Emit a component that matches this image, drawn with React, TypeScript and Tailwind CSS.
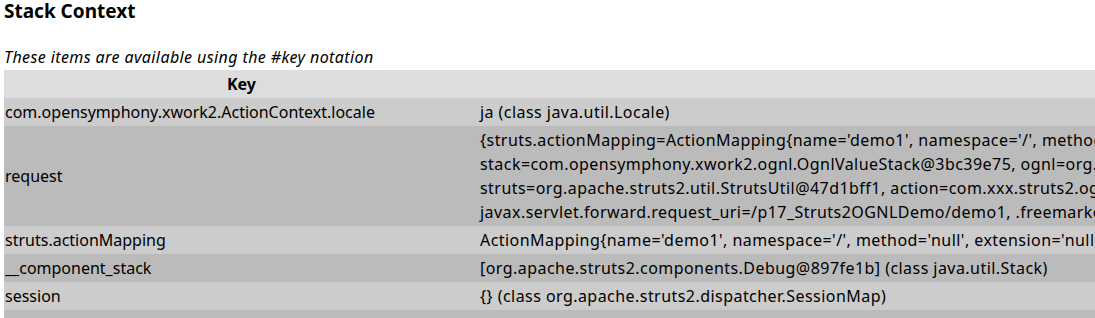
const requestLines = [
  "{struts.actionMapping=ActionMapping{name='demo1', namespace='/', method='null', extension='null', params={}, result=null},",
  'stack=com.opensymphony.xwork2.ognl.OgnlValueStack@3bc39e75, ognl=org.apache.struts2.views.jsp.ui.OgnlTool@5a2e4553,',
  'struts=org.apache.struts2.util.StrutsUtil@47d1bff1, action=com.xxx.struts2.ognl.Demo1Action@28ba21f3,',
  'javax.servlet.forward.request_uri=/p17_Struts2OGNLDemo/demo1, .freemarker.Request=freemarker.ext.servlet.HttpRequestHashModel@6d6f6e28}',
];

const rows: { key: string; value: string[] }[] = [
  { key: 'com.opensymphony.xwork2.ActionContext.locale', value: ['ja (class java.util.Locale)'] },
  { key: 'request', value: requestLines },
  {
    key: 'struts.actionMapping',
    value: [
      "ActionMapping{name='demo1', namespace='/', method='null', extension='null', params={}, result=null} (class org.apache.struts2.dispatcher.mapper.ActionMapping)",
    ],
  },
  { key: '__component_stack', value: ['[org.apache.struts2.components.Debug@897fe1b] (class java.util.Stack)'] },
  { key: 'session', value: ['{} (class org.apache.struts2.dispatcher.SessionMap)'] },
  { key: 'xwork.NullHandler.createNullObjects', value: ['false (class java.lang.Boolean)'] },
];

export default function App() {
  return (
    <div className="w-[1095px] h-[318px] overflow-hidden bg-white px-1 text-black font-['Noto_Sans',sans-serif]">
      <h3 className="text-[19px] font-bold leading-[22px]">Stack Context</h3>
      <p className="mt-[23px] text-[16px] italic leading-[24px] tracking-[0.4px]">
        These items are available using the #key notation
      </p>

      {/* Stack context table */}
      <table className="mt-[1px] table-fixed w-[1800px] border-collapse text-[16px] leading-[24px]">
        <thead>
          <tr className="bg-[#dddddd]">
            <th className="w-[475px] px-[1px] py-[2px] text-center font-bold">Key</th>
            <th className="px-[1px] py-[2px] text-center font-bold">Value</th>
          </tr>
        </thead>
        <tbody>
          {rows.map((row, i) => (
            <tr key={row.key} className={i % 2 === 0 ? 'bg-[#cccccc]' : 'bg-[#bbbbbb]'}>
              <td className="px-[1px] py-[2px] align-middle whitespace-nowrap">{row.key}</td>
              <td className="px-[1px] py-[2px] align-middle tracking-[0.45px]">
                {row.value.map((line) => (
                  <div key={line} className="whitespace-nowrap">{line}</div>
                ))}
              </td>
            </tr>
          ))}
        </tbody>
      </table>
    </div>
  );
}
